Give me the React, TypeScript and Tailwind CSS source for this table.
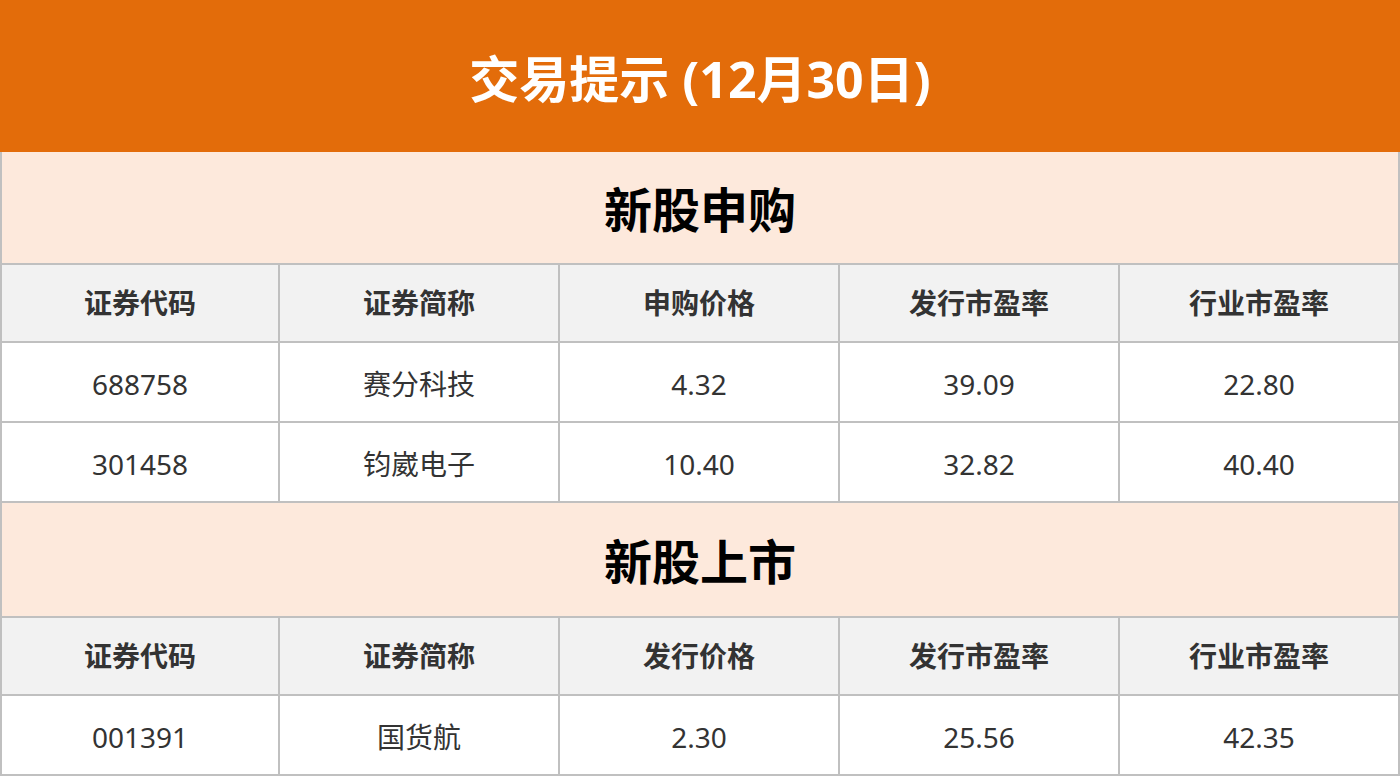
const font = { fontFamily: '"Noto Sans", "Noto Sans CJK SC", sans-serif' };

type Row = string[];

const sections: { title: string; head: Row; rows: Row[] }[] = [
  {
    title: "新股申购",
    head: ["证券代码", "证券简称", "申购价格", "发行市盈率", "行业市盈率"],
    rows: [
      ["688758", "赛分科技", "4.32", "39.09", "22.80"],
      ["301458", "钧崴电子", "10.40", "32.82", "40.40"],
    ],
  },
  {
    title: "新股上市",
    head: ["证券代码", "证券简称", "发行价格", "发行市盈率", "行业市盈率"],
    rows: [["001391", "国货航", "2.30", "25.56", "42.35"]],
  },
];

const Cells = ({ cells, head }: { cells: Row; head?: boolean }) => (
  <div className="grid grid-cols-[278px_280px_280px_280px_280px]">
    {cells.map((c, i) => (
      <div
        key={i}
        className={
          head
            ? "h-[78px] flex items-center justify-center border-r-2 border-b-2 border-[#c0c0c0] bg-[#f2f2f2] text-[28px] font-bold text-[#333333]"
            : "h-[80px] flex items-center justify-center border-r-2 border-b-2 border-[#c0c0c0] bg-white text-[28px] text-[#333333] pt-[3px]"
        }
      >
        {c}
      </div>
    ))}
  </div>
);

export default function App() {
  return (
    <div className="w-[1400px] h-[778px] bg-white overflow-hidden" style={font}>
      <div className="h-[152px] flex items-center justify-center bg-[#e36c0a] pt-[6px]">
        <h1 className="text-[50px] font-bold text-white leading-none">交易提示 (12月30日)</h1>
      </div>
      <div className="border-l-2 border-[#c0c0c0]">
        {sections.map((s, si) => (
          <div key={s.title}>
            <div
              className={
                si === 0
                  ? "h-[113px] flex items-center justify-center border-r-2 border-b-2 border-[#c0c0c0] bg-[#fde9dc] pt-[4px]"
                  : "h-[115px] flex items-center justify-center border-r-2 border-b-2 border-[#c0c0c0] bg-[#fde9dc] pt-[4px]"
              }
            >
              <h2 className="text-[48px] font-bold text-black leading-none">{s.title}</h2>
            </div>
            <Cells cells={s.head} head />
            {s.rows.map((r) => (
              <Cells key={r[0]} cells={r} />
            ))}
          </div>
        ))}
      </div>
    </div>
  );
}
